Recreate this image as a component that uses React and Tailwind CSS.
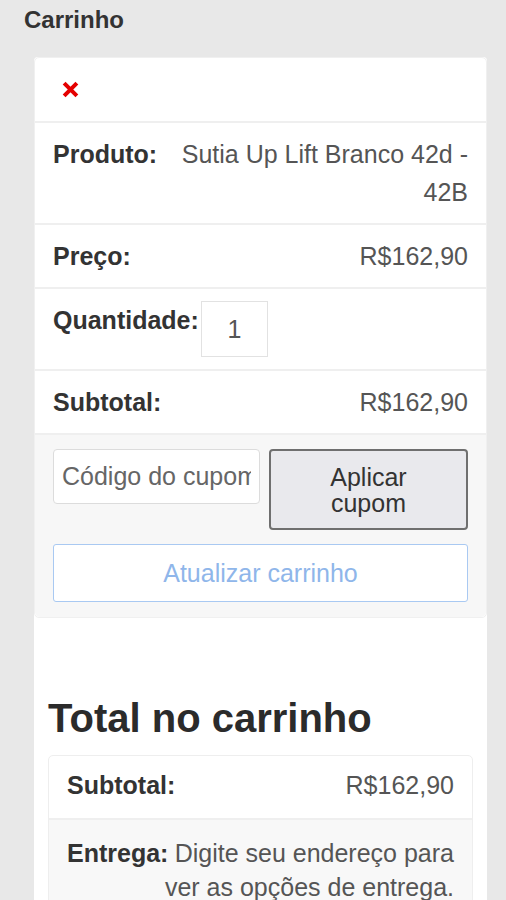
import React from 'react'

function Row({ label, children, className = '' }) {
  return (
    <div className={`border-t-2 border-[#efefef] px-[18px] py-[12px] text-right ${className}`}>
      <span className="float-left font-bold text-[#333]">{label}</span>
      <span className="text-[#555]">{children}</span>
    </div>
  )
}

export default function App() {
  return (
    <div className="min-h-screen bg-[#e8e8e8] font-['Liberation_Sans',Arial,sans-serif] pb-8">
      <h2 className="pl-6 pt-[2px] text-[24px] leading-[36px] font-bold text-[#333]">Carrinho</h2>

      <div className="ml-[34px] mt-[19px] w-[453px] rounded-t-[4px] bg-white">
        {/* cart item card */}
        <div className="rounded-[5px] border border-[#f0f0f0] text-[25px] leading-[38px]">
          <div className="flex h-[63px] items-center pl-[27px]">
            <svg width="17" height="17" viewBox="0 0 16 16" aria-label="Remover">
              <path d="M2 2 L14 14 M14 2 L2 14" stroke="#e50000" strokeWidth="3.8" strokeLinecap="butt" />
            </svg>
          </div>

          <Row label="Produto:">Sutia Up Lift Branco 42d - 42B</Row>
          <Row label="Preço:">R$162,90</Row>

          <div className="flex items-start border-t-2 border-[#efefef] px-[18px] py-[12px]">
            <span className="font-bold text-[#333]">Quantidade:</span>
            <input
              type="text"
              defaultValue="1"
              className="ml-[2px] h-[56px] w-[67px] border border-[#e2e2e2] bg-white text-center text-[25px] text-[#555] outline-none"
            />
          </div>

          <Row label="Subtotal:">R$162,90</Row>

          <div className="rounded-b-[5px] border-t-2 border-[#efefef] bg-[#f7f7f7] px-[18px] pt-[14px] pb-[15px]">
            <div className="flex items-start gap-[9px]">
              <input
                type="text"
                placeholder="Código do cupom"
                className="h-[55px] w-[207px] rounded-[4px] border border-[#dcdcdc] bg-white px-[8px] text-[25px] text-[#555] placeholder:text-[#666] outline-none"
              />
              <button className="h-[81px] w-[201px] rounded-[4px] border-2 border-[#6f6f6f] bg-[#e9e9ed] text-[25px] leading-[26px] text-[#333]">
                Aplicar
                <br />
                cupom
              </button>
            </div>
            <button className="mt-[14px] h-[58px] w-full rounded-[3px] border border-[#a9c9f2] bg-white text-[25px] text-[#8fb6ea]">
              Atualizar carrinho
            </button>
          </div>
        </div>

        {/* totals */}
        <div className="px-[14px]">
          <h2 className="mt-[76px] text-[40px] leading-[48px] font-bold text-[#2b2b2b]">Total no carrinho</h2>
          <div className="mt-[13px] w-[425px] rounded-[5px] border border-[#eeeeee] text-[25px] leading-[34px]">
            <div className="px-[18px] pt-[12px] pb-[16px] text-right">
              <span className="float-left font-bold text-[#333]">Subtotal:</span>
              <span className="text-[#555]">R$162,90</span>
            </div>
            <div className="border-t-2 border-[#efefef] bg-[#f8f8f8] px-[18px] py-[16px] text-right">
              <span className="float-left font-bold text-[#333]">Entrega:</span>
              <span className="text-[#555]">Digite seu endereço para ver as opções de entrega.</span>
            </div>
          </div>
        </div>
      </div>
    </div>
  )
}
